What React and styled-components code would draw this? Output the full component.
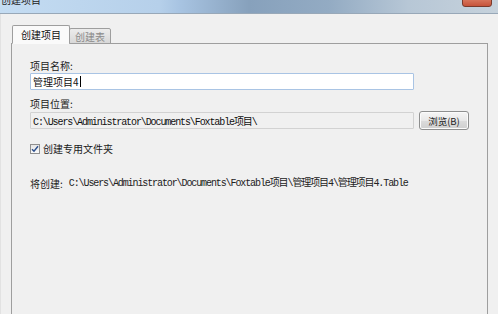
import styled, { createGlobalStyle } from "styled-components";

const Global = createGlobalStyle`
  html, body {
    margin: 0;
    padding: 0;
    background: #f0f0f0;
    overflow: hidden;
  }
  * { box-sizing: border-box; }
`;

const cjk = `"Noto Sans CJK SC", "Noto Sans", sans-serif`;
const mono = `"Liberation Mono", "Noto Sans CJK SC", monospace`;

const Window = styled.div`
  width: 498px;
  height: 314px;
  display: flex;
  flex-direction: column;
  background: #f0f0f0;
  font-family: ${cjk};
  color: #1a1a1a;
  overflow: hidden;
`;

const TitleBar = styled.div`
  position: relative;
  height: 14px;
  flex: none;
  background: linear-gradient(
    90deg,
    #c4dcf2 0%,
    #b6d0ea 32%,
    #a8c4e2 36%,
    #87a1bc 50%,
    #93abc3 66%,
    #b7c7d6 82%,
    #c6d2dc 100%
  );
  border-bottom: 1px solid #98a8b8;
  overflow: hidden;
`;

const Title = styled.div`
  font-size: 10px;
  line-height: 10px;
  margin-top: -5px;
  padding-left: 1px;
  color: #222;
`;

const CloseButton = styled.div`
  position: absolute;
  right: 6px;
  top: -6px;
  width: 30px;
  height: 13px;
  border-radius: 3px;
  border: 1px solid #7a3a2c;
  background: linear-gradient(#e48f76, #c6533a);
`;

const Body = styled.div`
  flex: 1;
  display: flex;
  flex-direction: column;
  padding: 11px 10px 0 10px;
  border-left: 1px solid #e2e2e2;
`;

const TabStrip = styled.div`
  display: flex;
  align-items: flex-end;
  padding-left: 1px;
  height: 19px;
  position: relative;
  z-index: 1;
  margin-bottom: -1px;
`;

const Tab = styled.div`
  height: ${({ active }) => (active ? "19px" : "16px")};
  padding: 0 ${({ active }) => (active ? "8px" : "5px")};
  display: flex;
  align-items: center;
  font-size: 10px;
  color: ${({ active }) => (active ? "#111" : "#8a8a8a")};
  background: ${({ active }) =>
    active ? "#fafafa" : "linear-gradient(#ececec, #d8d8d8)"};
  border: 1px solid #9e9e9e;
  border-bottom: ${({ active }) => (active ? "1px solid #fafafa" : "1px solid #9e9e9e")};
  border-radius: 2px 2px 0 0;
  margin-left: ${({ active }) => (active ? "0" : "-1px")};
`;

const Panel = styled.div`
  flex: 1;
  border: 1px solid #9e9e9e;
  border-bottom: none;
  background: #f0f0f0;
  padding: 15px 0 0 18px;
  display: flex;
  flex-direction: column;
`;

const Label = styled.div`
  font-size: 10px;
  line-height: 14px;
  color: #222;
`;

const Field = styled.div`
  width: 384px;
  height: 17px;
  display: flex;
  align-items: center;
  padding-left: 2px;
  background: ${({ readOnly }) => (readOnly ? "#f0f0f0" : "#ffffff")};
  border: 1px solid ${({ readOnly }) => (readOnly ? "#d2d2d2" : "#a9c4e4")};
  border-radius: 1px;
  font-family: ${({ readOnly }) => (readOnly ? mono : cjk)};
  font-size: 10px;
  letter-spacing: ${({ readOnly }) => (readOnly ? "-1.1px" : "0")};
  color: #111;
  white-space: nowrap;
`;

const Caret = styled.span`
  display: inline-block;
  width: 1px;
  height: 11px;
  background: #000;
  margin-left: 1px;
`;

const Row = styled.div`
  display: flex;
  align-items: center;
  gap: 5px;
  margin-top: ${({ gap }) => gap || 0}px;
`;

const Button = styled.div`
  width: 50px;
  height: 19px;
  display: flex;
  align-items: center;
  justify-content: center;
  font-size: 9.5px;
  color: #222;
  border: 1px solid #8e8f8f;
  border-radius: 3px;
  background: linear-gradient(#f6f6f6 0%, #e8e8e8 50%, #dcdcdc 51%, #cfcfcf 100%);
  box-shadow: inset 0 0 0 1px #fbfbfb;
`;

const Check = styled.div`
  width: 10px;
  height: 10px;
  border: 1px solid #8f8f8f;
  background: linear-gradient(#e6e6e6, #fafafa);
  display: flex;
  align-items: center;
  justify-content: center;
`;

const CheckText = styled.span`
  font-size: 10px;
  line-height: 14px;
  margin-left: -2px;
`;

const Result = styled.div`
  display: flex;
  align-items: center;
  margin-top: ${({ gap }) => gap}px;
  font-size: 10px;
  line-height: 14px;
  white-space: nowrap;
`;

const Path = styled.span`
  font-family: ${mono};
  font-size: 10px;
  letter-spacing: -1.1px;
  margin-left: 6px;
  color: #222;
`;

export default function App() {
  return (
    <Window>
      <Global />
      <TitleBar>
        <Title>创建项目</Title>
        <CloseButton />
      </TitleBar>
      <Body>
        <TabStrip>
          <Tab active>创建项目</Tab>
          <Tab>创建表</Tab>
        </TabStrip>
        <Panel>
          <Label>项目名称:</Label>
          <Field>
            管理项目4
            <Caret />
          </Field>
          <Label style={{ marginTop: 7 }}>项目位置:</Label>
          <Row>
            <Field readOnly>C:\Users\Administrator\Documents\Foxtable项目\</Field>
            <Button>浏览(B)</Button>
          </Row>
          <Row gap={12}>
            <Check>
              <svg width="8" height="8" viewBox="0 0 8 8">
                <path d="M1 4.2 L3 6.3 L7 1.2" fill="none" stroke="#2b4e8c" strokeWidth="1.4" />
              </svg>
            </Check>
            <CheckText>创建专用文件夹</CheckText>
          </Row>
          <Result gap={21}>
            将创建:
            <Path>C:\Users\Administrator\Documents\Foxtable项目\管理项目4\管理项目4.Table</Path>
          </Result>
        </Panel>
      </Body>
    </Window>
  );
}
